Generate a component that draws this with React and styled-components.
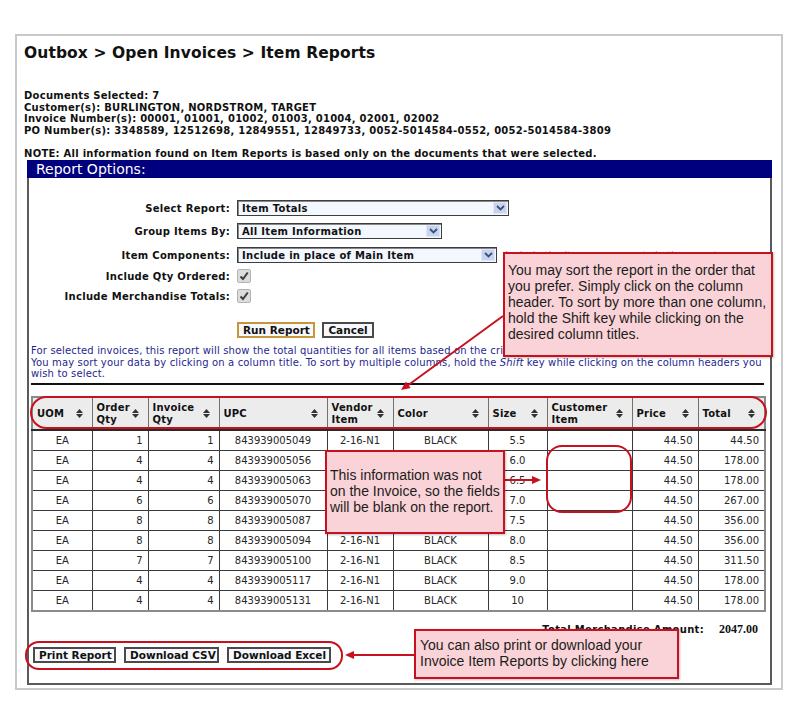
import React from 'react';
import styled, { createGlobalStyle } from 'styled-components';

const GlobalStyle = createGlobalStyle`
  html, body {
    margin: 0;
    padding: 0;
    background: #fff;
  }
  body {
    font-family: 'DejaVu Sans', Verdana, sans-serif;
    color: #111;
  }
`;

const Page = styled.div`
  position: relative;
  width: 800px;
  height: 724px;
  padding: 34px 0 0 15px;
  box-sizing: border-box;
  background: #fff;
  overflow: hidden;
`;

const Frame = styled.div`
  width: 768px;
  height: 656px;
  box-sizing: border-box;
  border: 2px solid #c9c9c9;
  padding: 6px 9px 0 7px;
`;

const Title = styled.h1`
  margin: 0;
  font-size: 15.5px;
  line-height: 22px;
  font-weight: bold;
  letter-spacing: 0.1px;
  color: #111;
`;

const Info = styled.div`
  margin-top: 26px;
  font-size: 10px;
  line-height: 11.7px;
  font-weight: bold;
  letter-spacing: 0.26px;
  white-space: nowrap;
  > div {
    height: 11.7px;
  }
`;

const Panel = styled.div`
  margin-left: 3px;
  width: 745px;
  height: 525px;
  box-sizing: border-box;
  border: 2px solid #5a5a5a;
  border-top: none;
`;

const PanelBar = styled.div`
  margin: 0 -2px;
  background: #00007f;
  color: #fff;
  font-size: 14px;
  line-height: 18px;
  padding-left: 9px;
`;

const FormRow = styled.div`
  display: grid;
  grid-template-columns: 201px 1fr;
  column-gap: 7px;
  align-items: center;
  margin-top: ${p => p.$gap}px;
  height: ${p => p.$h}px;
`;

const Label = styled.div`
  text-align: right;
  font-size: 10px;
  font-weight: bold;
  letter-spacing: 0.3px;
  white-space: nowrap;
`;

const Field = styled.div`
  display: flex;
  align-items: center;
  gap: 8px;
  white-space: nowrap;
`;

const Select = styled.div`
  width: ${p => p.$w}px;
  height: 16px;
  box-sizing: border-box;
  border: 1px solid #3d3d3d;
  box-shadow: inset 1px 1px 0 #888;
  background: #f3f7fe;
  display: flex;
  align-items: center;
  padding-left: 4px;
  font-size: 10px;
  font-weight: bold;
  letter-spacing: 0.3px;
`;

const SelectArrow = styled.span`
  margin-left: auto;
  margin-right: 1px;
  width: 14px;
  height: 12px;
  background: #c6d4f0;
  border: 1px solid #dfe7f7;
  box-sizing: border-box;
  display: flex;
  align-items: center;
  justify-content: center;
`;

const Hint = styled.span`
  font-size: 10px;
  color: #9a9a9a;
`;

const Check = styled.span`
  width: 14px;
  height: 14px;
  box-sizing: border-box;
  border: 1px solid #b3b3b3;
  border-radius: 2px;
  background: #dcdcdc;
  display: flex;
  align-items: center;
  justify-content: center;
`;

const Button = styled.button`
  height: 16px;
  box-sizing: border-box;
  padding: 0 4px;
  border: 2px solid ${p => (p.$primary ? '#c8953c' : '#4a4a4a')};
  border-radius: 0;
  background: #f6f8fc;
  font-family: 'DejaVu Sans', Verdana, sans-serif;
  font-size: 10.5px;
  font-weight: bold;
  line-height: 12px;
  color: #111;
  width: ${p => p.$w}px;
  white-space: nowrap;
`;

const ButtonGroup = styled.div`
  display: flex;
  gap: ${p => p.$gap || 7}px;
`;

const Description = styled.div`
  margin-top: 7px;
  padding-left: 2px;
  font-size: 10px;
  line-height: 11.5px;
  letter-spacing: 0.15px;
  color: #1f1f8f;
  white-space: nowrap;
  > div {
    height: 11.5px;
  }
`;

const Rule = styled.div`
  margin: 3.5px 0 0 2px;
  width: 733px;
  height: 2px;
  background: #111;
`;

const Table = styled.table`
  margin: 11px 0 0 2px;
  width: 733px;
  table-layout: fixed;
  border-collapse: collapse;
  border: 2px solid #8a8a8a;
  font-size: 10px;
`;

const Th = styled.th`
  height: 31px;
  padding: 0 0 0 4px;
  background: #ececec;
  border: 1px solid #707070;
  border-bottom: 2px solid #2a2a2a;
  text-align: left;
  font-weight: bold;
  letter-spacing: 0.2px;
  line-height: 12px;
  color: #111;
`;

const HeadInner = styled.div`
  display: flex;
  align-items: center;
  justify-content: space-between;
  padding-right: 9px;
`;

const Td = styled.td`
  height: 19px;
  padding: 0 5px;
  border: 1px solid #3a3a3a;
  text-align: ${p => p.$align || 'center'};
  color: #262626;
  white-space: nowrap;
`;

const TotalRow = styled.div`
  margin-top: 10px;
  height: 14px;
  display: flex;
  justify-content: flex-end;
  align-items: center;
  gap: 15px;
  padding-right: 12px;
`;

const TotalLabel = styled.span`
  font-size: 10px;
  font-weight: bold;
  letter-spacing: 0.3px;
`;

const TotalValue = styled.span`
  font-family: 'Liberation Serif', 'Times New Roman', serif;
  font-size: 12px;
  font-weight: bold;
`;

const Actions = styled.div`
  margin: 11px 0 0 4px;
`;

const Callout = styled.div`
  position: absolute;
  left: ${p => p.$x}px;
  top: ${p => p.$y}px;
  width: ${p => p.$w}px;
  height: ${p => p.$h}px;
  box-sizing: border-box;
  padding: ${p => p.$pad};
  background: #f9d3d7;
  border: 2px solid #c8101e;
  box-shadow: 1px 1px 2px rgba(0, 0, 0, 0.25);
  font-family: 'Liberation Sans', Arial, sans-serif;
  font-size: 14px;
  line-height: 16px;
  color: #1c1c1c;
  white-space: nowrap;
`;

const Ring = styled.div`
  position: absolute;
  left: ${p => p.$x}px;
  top: ${p => p.$y}px;
  width: ${p => p.$w}px;
  height: ${p => p.$h}px;
  box-sizing: border-box;
  border: 2px solid #c8101e;
  border-radius: ${p => p.$r}px;
  pointer-events: none;
`;

const Arrows = styled.svg`
  position: absolute;
  left: 0;
  top: 0;
  pointer-events: none;
`;

const Chevron = () => (
  <svg width="9" height="6" viewBox="0 0 9 6">
    <path d="M1 1 L4.5 4.5 L8 1" fill="none" stroke="#3b4f78" strokeWidth="1.8" />
  </svg>
);

const Tick = () => (
  <svg width="10" height="10" viewBox="0 0 10 10">
    <path d="M1.5 5.5 L4 8 L8.8 1.5" fill="none" stroke="#3c3c3c" strokeWidth="2" />
  </svg>
);

const SortIcon = () => (
  <svg width="7" height="9" viewBox="0 0 7 9">
    <polygon points="0,4 3.5,0 7,4" fill="#333" />
    <polygon points="0,5 3.5,9 7,5" fill="#333" />
  </svg>
);

const columns = [
  { title: ['UOM'], w: 60 },
  { title: ['Order', 'Qty'], w: 56 },
  { title: ['Invoice', 'Qty'], w: 71 },
  { title: ['UPC'], w: 108 },
  { title: ['Vendor', 'Item'], w: 66 },
  { title: ['Color'], w: 95 },
  { title: ['Size'], w: 59 },
  { title: ['Customer', 'Item'], w: 85 },
  { title: ['Price'], w: 66 },
  { title: ['Total'], w: 67 },
];

const aligns = ['center', 'right', 'right', 'center', 'center', 'center', 'center', 'left', 'right', 'right'];

const rows = [
  ['EA', '1', '1', '843939005049', '2-16-N1', 'BLACK', '5.5', '', '44.50', '44.50'],
  ['EA', '4', '4', '843939005056', '2-16-N1', 'BLACK', '6.0', '', '44.50', '178.00'],
  ['EA', '4', '4', '843939005063', '2-16-N1', 'BLACK', '6.5', '', '44.50', '178.00'],
  ['EA', '6', '6', '843939005070', '2-16-N1', 'BLACK', '7.0', '', '44.50', '267.00'],
  ['EA', '8', '8', '843939005087', '2-16-N1', 'BLACK', '7.5', '', '44.50', '356.00'],
  ['EA', '8', '8', '843939005094', '2-16-N1', 'BLACK', '8.0', '', '44.50', '356.00'],
  ['EA', '7', '7', '843939005100', '2-16-N1', 'BLACK', '8.5', '', '44.50', '311.50'],
  ['EA', '4', '4', '843939005117', '2-16-N1', 'BLACK', '9.0', '', '44.50', '178.00'],
  ['EA', '4', '4', '843939005131', '2-16-N1', 'BLACK', '10', '', '44.50', '178.00'],
];

export default function App() {
  return (
    <Page>
      <GlobalStyle />
      <Frame>
        <Title>Outbox &gt; Open Invoices &gt; Item Reports</Title>
        <Info>
          <div>Documents Selected: 7</div>
          <div>Customer(s): BURLINGTON, NORDSTROM, TARGET</div>
          <div>Invoice Number(s): 00001, 01001, 01002, 01003, 01004, 02001, 02002</div>
          <div>PO Number(s): 3348589, 12512698, 12849551, 12849733, 0052-5014584-0552, 0052-5014584-3809</div>
          <div />
          <div>NOTE: All information found on Item Reports is based only on the documents that were selected.</div>
        </Info>

        <Panel>
          <PanelBar>Report Options:</PanelBar>

          <FormRow $gap={22} $h={16}>
            <Label>Select Report:</Label>
            <Field>
              <Select $w={272}>
                Item Totals
                <SelectArrow><Chevron /></SelectArrow>
              </Select>
            </Field>
          </FormRow>
          <FormRow $gap={7} $h={16}>
            <Label>Group Items By:</Label>
            <Field>
              <Select $w={205}>
                All Item Information
                <SelectArrow><Chevron /></SelectArrow>
              </Select>
            </Field>
          </FormRow>
          <FormRow $gap={8} $h={16}>
            <Label>Item Components:</Label>
            <Field>
              <Select $w={260}>
                Include in place of Main Item
                <SelectArrow><Chevron /></SelectArrow>
              </Select>
              <Hint>Include the item components in the report</Hint>
            </Field>
          </FormRow>
          <FormRow $gap={6} $h={14}>
            <Label>Include Qty Ordered:</Label>
            <Field>
              <Check><Tick /></Check>
            </Field>
          </FormRow>
          <FormRow $gap={6} $h={14}>
            <Label>Include Merchandise Totals:</Label>
            <Field>
              <Check><Tick /></Check>
            </Field>
          </FormRow>
          <FormRow $gap={19} $h={16}>
            <span />
            <ButtonGroup $gap={7}>
              <Button $primary $w={78}>Run Report</Button>
              <Button $w={52}>Cancel</Button>
            </ButtonGroup>
          </FormRow>

          <Description>
            <div>For selected invoices, this report will show the total quantities for all items based on the criteria selected above.</div>
            <div>
              You may sort your data by clicking on a column title. To sort by multiple columns, hold the <i>Shift</i> key while clicking on the column headers you
            </div>
            <div>wish to select.</div>
          </Description>
          <Rule />

          <Table>
            <colgroup>
              {columns.map((c, i) => (
                <col key={i} style={{ width: c.w }} />
              ))}
            </colgroup>
            <thead>
              <tr>
                {columns.map((c, i) => (
                  <Th key={i}>
                    <HeadInner>
                      <span>
                        {c.title.map((t, j) => (
                          <div key={j}>{t}</div>
                        ))}
                      </span>
                      <SortIcon />
                    </HeadInner>
                  </Th>
                ))}
              </tr>
            </thead>
            <tbody>
              {rows.map((r, i) => (
                <tr key={i}>
                  {r.map((v, j) => (
                    <Td key={j} $align={aligns[j]}>{v}</Td>
                  ))}
                </tr>
              ))}
            </tbody>
          </Table>

          <TotalRow>
            <TotalLabel>Total Merchandise Amount:</TotalLabel>
            <TotalValue>2047.00</TotalValue>
          </TotalRow>

          <Actions>
            <ButtonGroup $gap={8}>
              <Button $w={83}>Print Report</Button>
              <Button $w={95}>Download CSV</Button>
              <Button $w={104}>Download Excel</Button>
            </ButtonGroup>
          </Actions>
        </Panel>
      </Frame>

      <Ring $x={30} $y={396} $w={737} $h={33} $r={17} />
      <Ring $x={546} $y={445} $w={86} $h={68} $r={16} />
      <Ring $x={25} $y={641} $w={318} $h={29} $r={14} />

      <Arrows width="800" height="724" viewBox="0 0 800 724">
        <g stroke="#c8101e" strokeWidth="2" fill="none">
          <line x1="503" y1="316" x2="407" y2="386" />
          <line x1="505" y1="480" x2="533" y2="480" />
          <line x1="414" y1="655" x2="353" y2="655" />
        </g>
        <g fill="#c8101e">
          <polygon points="401,390 410.6,387.9 405.9,381.5" />
          <polygon points="541,480 532,476 532,484" />
          <polygon points="345,655 354,651 354,659" />
        </g>
      </Arrows>

      <Callout $x={503} $y={252} $w={270} $h={105} $pad="8px 3px">
        You may sort the report in the order that
        <br />
        you prefer. Simply click on the column
        <br />
        header. To sort by more than one column,
        <br />
        hold the Shift key while clicking on the
        <br />
        desired column titles.
      </Callout>
      <Callout $x={325} $y={450} $w={180} $h={84} $pad="15px 3px">
        This information was not
        <br />
        on the Invoice, so the fields
        <br />
        will be blank on the report.
      </Callout>
      <Callout $x={414} $y={629} $w={265} $h={50} $pad="6px 4px">
        You can also print or download your
        <br />
        Invoice Item Reports by clicking here
      </Callout>
    </Page>
  );
}
